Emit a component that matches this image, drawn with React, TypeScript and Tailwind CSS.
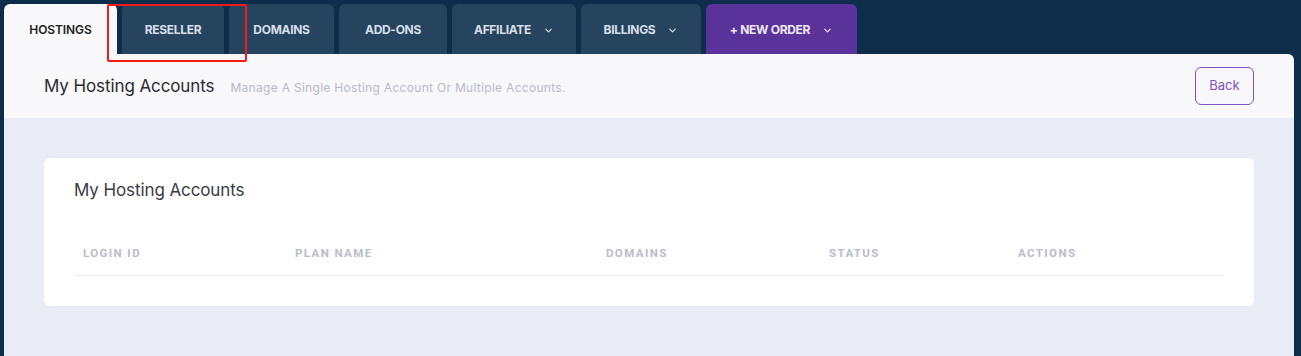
import React from 'react';
import { ChevronDown } from 'lucide-react';

type Tab = { label: string; width: string; menu?: boolean; active?: boolean; accent?: boolean };

const tabs: Tab[] = [
  { label: 'HOSTINGS', width: 'w-[113px]', active: true },
  { label: 'RESELLER', width: 'w-[102px]' },
  { label: 'DOMAINS', width: 'w-[105px]' },
  { label: 'ADD-ONS', width: 'w-[108px]' },
  { label: 'AFFILIATE', width: 'w-[124px]', menu: true },
  { label: 'BILLINGS', width: 'w-[120px]', menu: true },
  { label: '+ NEW ORDER', width: 'w-[151px]', menu: true, accent: true },
];

const columns = [
  { label: 'LOGIN ID', width: 'w-[212px]' },
  { label: 'PLAN NAME', width: 'w-[311px]' },
  { label: 'DOMAINS', width: 'w-[223px]' },
  { label: 'STATUS', width: 'w-[189px]' },
  { label: 'ACTIONS', width: 'flex-1' },
];

const App: React.FC = () => {
  return (
    <div className="relative min-h-screen flex flex-col bg-[#0e2d4b] pt-1 pl-1 pr-[7px] font-['Inter',sans-serif]">
      <nav className="flex gap-[5px] h-[50px]">
        {tabs.map((tab) => (
          <div
            key={tab.label}
            className={
              tab.active
                ? `${tab.width} flex items-center justify-center pt-[2px] rounded-t-md bg-[#f8f8fa] text-[12px] font-semibold text-[#222] tracking-[-0.1px]`
                : tab.accent
                ? `${tab.width} flex items-center justify-center gap-3 pt-[2px] rounded-t-md bg-[#59329a] text-[12px] font-bold text-[#eee9f7] tracking-[-0.3px]`
                : `${tab.width} flex items-center justify-center gap-3 pt-[2px] rounded-t-md bg-[#27445f] text-[12px] font-bold text-[#d6dee8] tracking-[-0.3px]`
            }
          >
            <span>{tab.label}</span>
            {tab.menu && <ChevronDown size={11} strokeWidth={2.5} />}
          </div>
        ))}
      </nav>

      <div className="flex-1 flex flex-col rounded-tr-md overflow-hidden">
        <div className="h-16 flex items-center justify-between bg-[#f8f8fa] pl-10 pr-10">
          <div className="flex items-baseline gap-4 pt-[2px]">
            <h1 className="text-[17px] text-[#2b2b33] tracking-[-0.1px]">My Hosting Accounts</h1>
            <p className="text-[12px] text-[#b9b9c8] tracking-[0.3px]">
              Manage A Single Hosting Account Or Multiple Accounts.
            </p>
          </div>
          <button className="w-[59px] h-[38px] rounded-md border border-[#7d52c8] text-[13px] text-[#7d52c8]">
            Back
          </button>
        </div>

        <div className="flex-1 bg-[#eaecf5] px-10 pt-10">
          <div className="bg-white rounded-md px-[30px] pt-[20px] pb-[30px]">
            <h2 className="text-[17px] text-[#3a3a44] leading-6 tracking-[-0.1px]">My Hosting Accounts</h2>
            <div className="mt-[30px] flex items-center h-[44px] px-[9px] border-b border-[#ebedf3] font-['Roboto',sans-serif]">
              {columns.map((col) => (
                <div
                  key={col.label}
                  className={`${col.width} text-[11.5px] font-bold tracking-[1.4px] text-[#bcbccb]`}
                >
                  {col.label}
                </div>
              ))}
            </div>
          </div>
        </div>
      </div>

      <div className="absolute left-[107px] top-[4px] w-[140px] h-[58px] border-2 border-[#f5191a] rounded-[2px]" />
    </div>
  );
};

export default App;
